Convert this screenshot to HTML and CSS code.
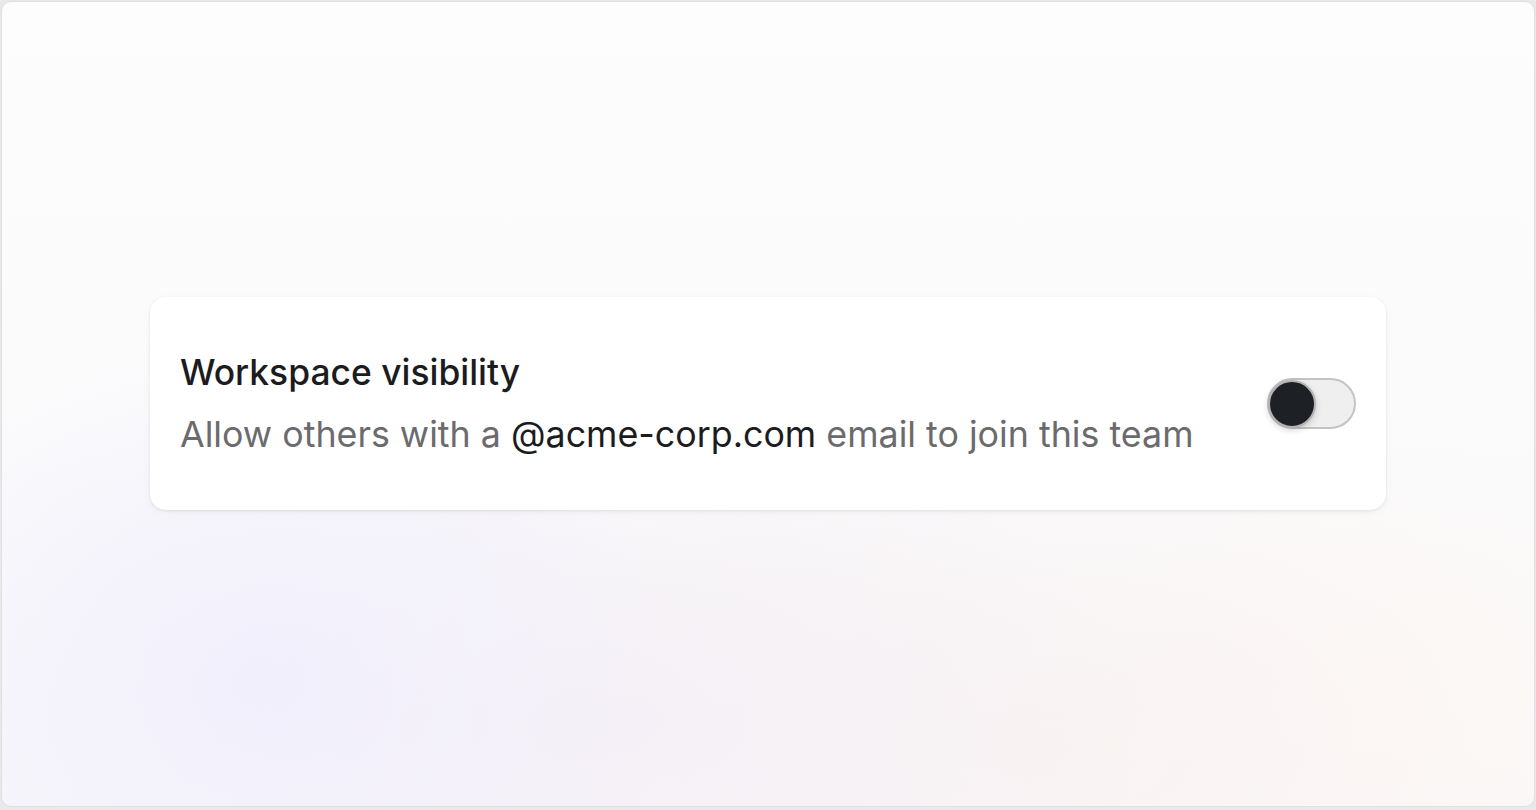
FILE: index.html
```html
<!DOCTYPE html>
<html lang="en">
<head>
<meta charset="utf-8">
<title>Workspace visibility</title>
<link rel="stylesheet" href="styles.css">
</head>
<body>
<div class="frame">
  <div class="card">
    <div class="text">
      <div class="title">Workspace visibility</div>
      <div class="desc">Allow others with a <span class="domain">@acme-corp.com</span> email to join this team</div>
    </div>
    <div class="toggle" role="switch" aria-checked="false">
      <span class="knob"></span>
    </div>
  </div>
</div>
</body>
</html>
```
FILE: styles.css
```css
html, body {
  margin: 0;
  padding: 0;
}
body {
  background: #e9e9ea;
  font-family: Inter, "Noto Sans", sans-serif;
  padding: 1px 1px 3px 1px;
  box-sizing: border-box;
  height: 810px;
}
.frame {
  box-sizing: border-box;
  height: 806px;
  border: 1px solid #e0e0e2;
  border-radius: 10px;
  background:
    radial-gradient(ellipse 420px 340px at 260px 680px, rgba(240,238,252,0.9), rgba(240,238,252,0) 100%),
    radial-gradient(ellipse 520px 300px at 620px 720px, rgba(244,239,245,0.9), rgba(244,239,245,0) 100%),
    radial-gradient(ellipse 560px 320px at 1050px 740px, rgba(250,243,242,0.9), rgba(250,243,242,0) 100%),
    radial-gradient(ellipse 400px 300px at 1420px 700px, rgba(252,249,245,0.9), rgba(252,249,245,0) 100%),
    linear-gradient(180deg, #fdfdfd 0%, #fbfbfc 45%, #f8f7fa 100%);
  display: flex;
  align-items: center;
  justify-content: center;
  padding-bottom: 1px;
}
.card {
  box-sizing: border-box;
  width: 1236px;
  height: 213px;
  background: #ffffff;
  border-radius: 16px;
  box-shadow: 0 1px 3px rgba(0,0,0,0.08), 0 2px 10px rgba(0,0,0,0.04);
  display: flex;
  align-items: center;
  justify-content: space-between;
  padding: 0 30px 0 30px;
}
.text {
  display: flex;
  flex-direction: column;
  gap: 17px;
}
.title {
  font-size: 35.4px;
  line-height: 44px;
  font-weight: 500;
  color: #1c1c1e;
}
.desc {
  font-size: 35.8px;
  line-height: 44px;
  font-weight: 400;
  color: #6b6b6e;
}
.domain {
  color: #1c1c1e;
}
.toggle {
  box-sizing: border-box;
  width: 89px;
  height: 51px;
  border-radius: 26px;
  background: #efefef;
  border: 2px solid #c4c4c6;
  display: flex;
  align-items: center;
}
.knob {
  box-sizing: border-box;
  width: 48px;
  height: 48px;
  border-radius: 50%;
  background: #1d2024;
  border: 2px solid #b3b3b5;
  box-shadow: 0 2px 6px rgba(0,0,0,0.18);
  margin-left: -1px;
}
```
